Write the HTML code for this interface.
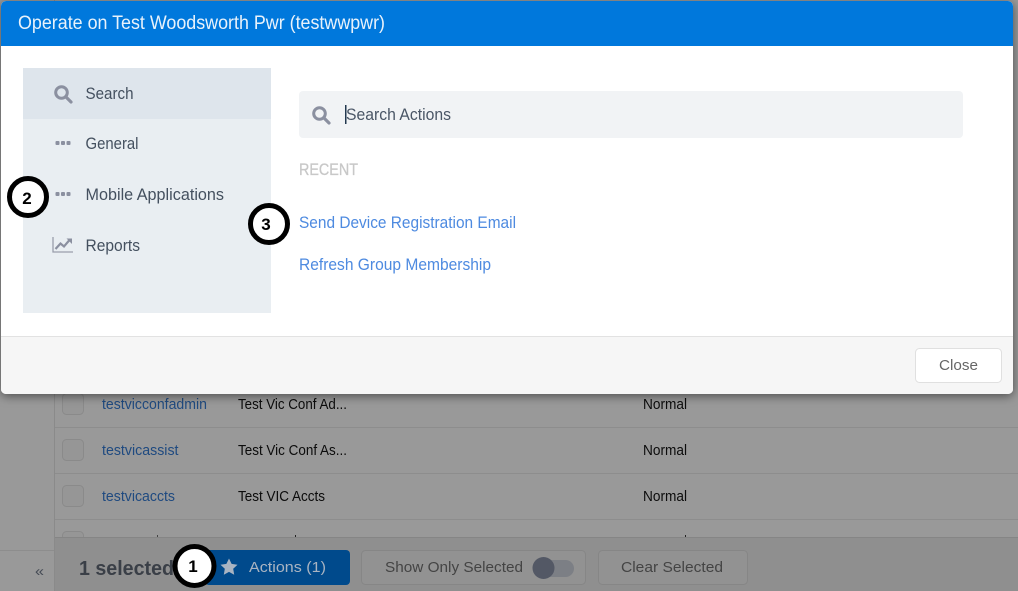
<!DOCTYPE html>
<html><head><meta charset="utf-8"><title>Operate</title>
<style>
html,body{margin:0;padding:0;width:1018px;height:591px;overflow:hidden;background:#999}
svg{display:block;position:absolute;left:0;top:0}
text{font-family:"Liberation Sans",sans-serif}
</style></head>
<body>
<svg width="1018" height="591" viewBox="0 0 1018 591" xmlns="http://www.w3.org/2000/svg">
<defs>
<filter id="sh" x="-5%" y="-5%" width="110%" height="115%"><feDropShadow dx="0" dy="2" stdDeviation="5" flood-color="#000" flood-opacity=".5"/></filter>
<g id="mag" fill="none" stroke="#8b90a0" stroke-width="3"><circle cx="7.500" cy="7.500" r="5.800"/><path d="M12 12l5 5" stroke-linecap="round" stroke-width="3.200"/></g>
</defs>
<rect width="1018" height="591" fill="#999"/>
<!-- background table -->
<rect x="54" y="0" width="1" height="591" fill="#8a8a8a"/>
<g fill="#8d8d8d">
<rect x="55" y="427" width="963" height="1"/><rect x="55" y="473" width="963" height="1"/><rect x="55" y="519" width="963" height="1"/>
<rect x="0" y="550" width="54" height="1"/>
</g>
<g fill="#969696" stroke="#8a8a8a"><rect x="62.500" y="393.500" width="21" height="21" rx="4"/><rect x="62.500" y="439.500" width="21" height="21" rx="4"/><rect x="62.500" y="485.500" width="21" height="21" rx="4"/><rect x="62.500" y="531.500" width="21" height="21" rx="4"/></g>
<g font-size="14.500" fill="#1f4a80">
<text x="102" y="409" textLength="105" lengthAdjust="spacingAndGlyphs">testvicconfadmin</text>
<text x="102" y="455" textLength="76.500" lengthAdjust="spacingAndGlyphs">testvicassist</text>
<text x="102" y="501" textLength="73" lengthAdjust="spacingAndGlyphs">testvicaccts</text>
</g>
<g font-size="14.500" fill="#0c0c0c">
<text x="238" y="409" textLength="109" lengthAdjust="spacingAndGlyphs">Test Vic Conf Ad...</text>
<text x="238" y="455" textLength="109" lengthAdjust="spacingAndGlyphs">Test Vic Conf As...</text>
<text x="238" y="501" textLength="87" lengthAdjust="spacingAndGlyphs">Test VIC Accts</text>
<text x="643" y="409" textLength="44" lengthAdjust="spacingAndGlyphs">Normal</text>
<text x="643" y="455" textLength="44" lengthAdjust="spacingAndGlyphs">Normal</text>
<text x="643" y="501" textLength="44" lengthAdjust="spacingAndGlyphs">Normal</text>
</g>
<rect x="157" y="535" width="1" height="2" fill="#444"/><rect x="295" y="535" width="1" height="2" fill="#222"/><rect x="685" y="535" width="1" height="2" fill="#222"/>
<!-- footer bar -->
<rect x="55" y="538" width="963" height="53" fill="#8f8f8f"/>
<rect x="55" y="537" width="963" height="1" fill="#858585"/>
<text x="35" y="576" font-size="15" fill="#454b55" textLength="9" lengthAdjust="spacingAndGlyphs">«</text>
<text x="79" y="575" font-size="20" font-weight="700" fill="#3a3f47" textLength="95" lengthAdjust="spacingAndGlyphs">1 selected</text>
<rect x="205" y="550" width="145" height="35" rx="4" fill="#004a8c"/>
<path d="M229 558.500l2.600 5.400 5.900.8-4.300 4.100 1 5.900-5.200-2.800-5.200 2.800 1-5.900-4.300-4.100 5.900-.8z" fill="#a9b4c2"/>
<text x="249" y="572" font-size="15" fill="#a9b4c2" textLength="77" lengthAdjust="spacingAndGlyphs">Actions (1)</text>
<rect x="361.500" y="550.500" width="224" height="34" rx="4" fill="#929292" stroke="#868686"/>
<text x="385" y="572" font-size="15" fill="#444" textLength="138" lengthAdjust="spacingAndGlyphs">Show Only Selected</text>
<rect x="535" y="560" width="39" height="17" rx="8.500" fill="#7c7f85"/>
<circle cx="543.500" cy="568" r="11" fill="#535865"/>
<rect x="598.500" y="550.500" width="149" height="34" rx="4" fill="#929292" stroke="#868686"/>
<text x="621" y="572" font-size="15" fill="#444" textLength="102" lengthAdjust="spacingAndGlyphs">Clear Selected</text>
<!-- modal -->
<rect x="1" y="1" width="1012" height="393" rx="5" fill="#fff" filter="url(#sh)"/>
<path d="M1 46V6a5 5 0 0 1 5-5H1008a5 5 0 0 1 5 5V46z" fill="#0078dc"/>
<text x="18" y="29" font-size="19" fill="#e8f2fb" textLength="367" lengthAdjust="spacingAndGlyphs">Operate on Test Woodsworth Pwr (testwwpwr)</text>
<path d="M1 336H1013V389a5 5 0 0 1-5 5H6a5 5 0 0 1-5-5z" fill="#f6f6f6"/>
<rect x="1" y="336" width="1012" height="1" fill="#e2e2e2"/>
<rect x="915.500" y="348.500" width="86" height="34" rx="4" fill="#fff" stroke="#e0e0e0"/>
<text x="939" y="370" font-size="15" fill="#666" textLength="39" lengthAdjust="spacingAndGlyphs">Close</text>
<!-- sidebar -->
<rect x="23" y="68" width="248" height="245" fill="#e9eef2"/>
<rect x="23" y="68" width="248" height="51" fill="#dee5ec"/>
<use href="#mag" x="54" y="85"/>
<g fill="#8b90a0"><rect x="55.500" y="141" width="4" height="4" rx="1"/><rect x="61" y="141" width="4" height="4" rx="1"/><rect x="66.500" y="141" width="4" height="4" rx="1"/>
<rect x="55.500" y="192" width="4" height="4" rx="1"/><rect x="61" y="192" width="4" height="4" rx="1"/><rect x="66.500" y="192" width="4" height="4" rx="1"/></g>
<path d="M53 237v15h20" fill="none" stroke="#9a9eac" stroke-width="1.300"/>
<path d="M55.500 249l5-5.500 3.500 3 5.500-6.500" fill="none" stroke="#8b90a0" stroke-width="2.200"/>
<path d="M66.500 238.500h5.500v5.500z" fill="#8b90a0"/>
<g font-size="17" fill="#44505f">
<text x="85.500" y="99" textLength="48" lengthAdjust="spacingAndGlyphs">Search</text>
<text x="85.500" y="149" textLength="53" lengthAdjust="spacingAndGlyphs">General</text>
<text x="85.500" y="200" textLength="138.500" lengthAdjust="spacingAndGlyphs">Mobile Applications</text>
<text x="85.500" y="251" textLength="54.500" lengthAdjust="spacingAndGlyphs">Reports</text>
</g>
<!-- search box -->
<rect x="299" y="91" width="664" height="47" rx="4" fill="#f1f3f5"/>
<use href="#mag" x="312" y="106"/>
<rect x="345" y="105" width="1.500" height="19" fill="#22384f"/>
<text x="346" y="120" font-size="17" fill="#4a5666" textLength="105" lengthAdjust="spacingAndGlyphs">Search Actions</text>
<text x="299" y="175" font-size="17" fill="#c8c8c8" stroke="#c8c8c8" stroke-width=".3" textLength="59" lengthAdjust="spacingAndGlyphs">RECENT</text>
<text x="299" y="228" font-size="17" fill="#4d8ae0" textLength="217" lengthAdjust="spacingAndGlyphs">Send Device Registration Email</text>
<text x="299" y="270" font-size="17" fill="#4d8ae0" textLength="192" lengthAdjust="spacingAndGlyphs">Refresh Group Membership</text>
<!-- callouts -->
<g fill="#fff" stroke="#000" stroke-width="5">
<circle cx="28" cy="197" r="18.500"/>
<circle cx="269" cy="224" r="18.500"/>
<circle cx="194.500" cy="566" r="19.500"/>
</g>
<g font-size="17" font-weight="700" fill="#000" text-anchor="middle">
<text x="27" y="204">2</text>
<text x="266" y="230">3</text>
<text x="193" y="572">1</text>
</g>
</svg>
</body></html>
